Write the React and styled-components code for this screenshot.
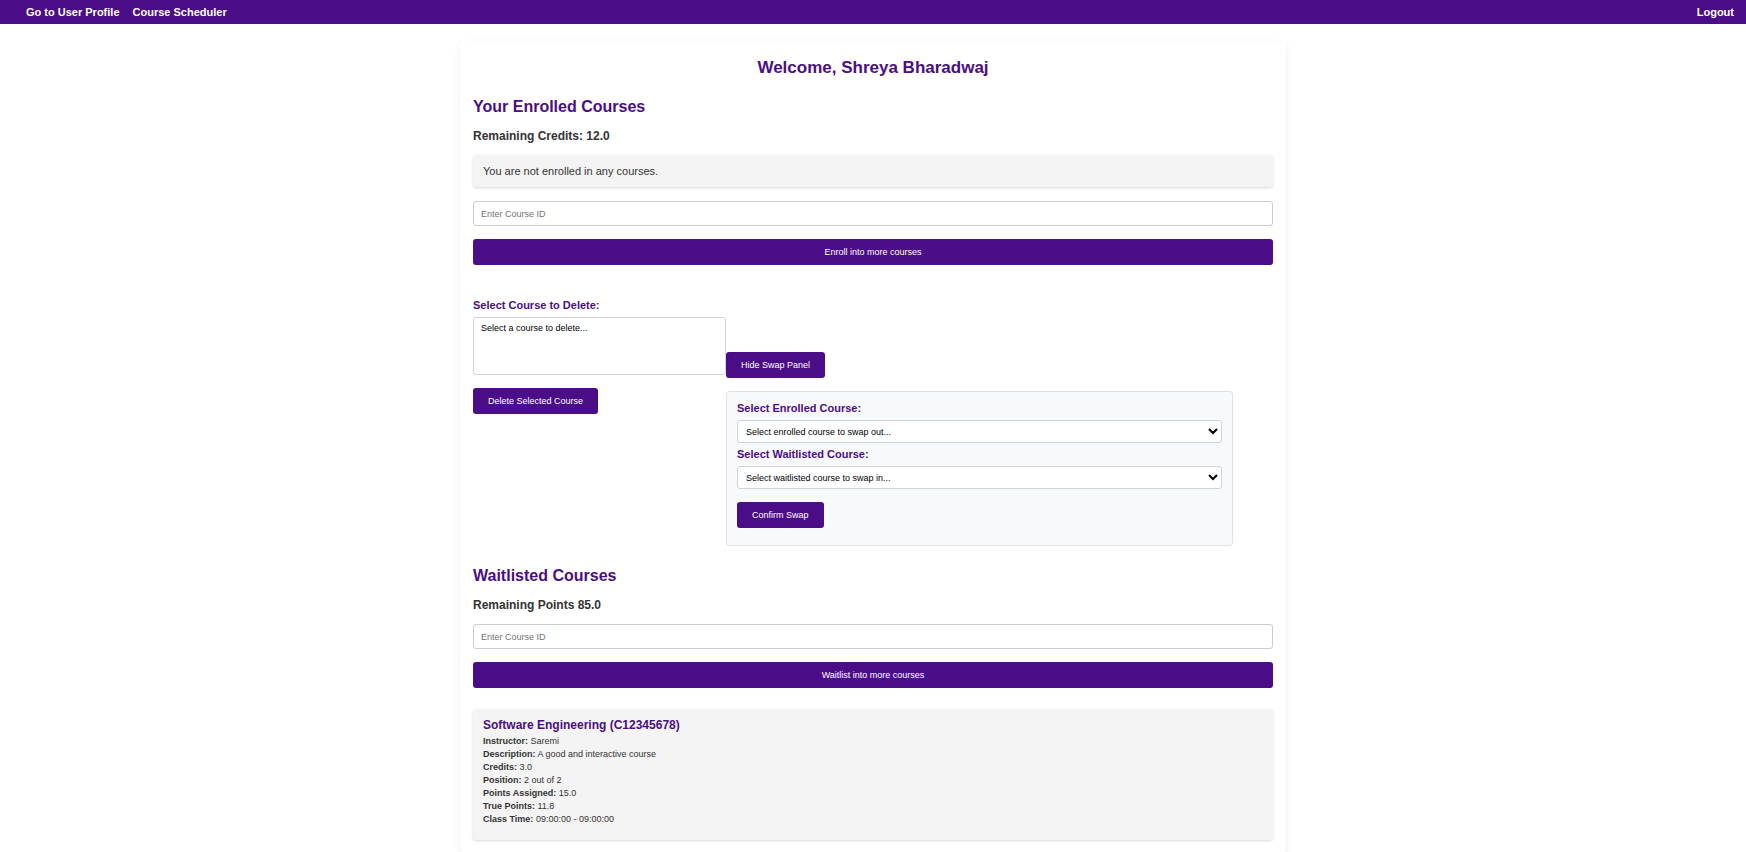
import React from "react";
import styled, { createGlobalStyle } from "styled-components";

const purple = "#4b0d87";

const GlobalStyle = createGlobalStyle`
  *, *::before, *::after { box-sizing: border-box; }
  body {
    margin: 0;
    background: #fff;
    color: #333;
    font-family: "Liberation Sans", Arial, sans-serif;
    font-size: 11px;
    line-height: 16px;
  }
`;

const NavBar = styled.nav`
  display: flex;
  align-items: center;
  justify-content: space-between;
  height: 24px;
  padding: 0 12px 0 26px;
  background: ${purple};
`;

const NavGroup = styled.div`
  display: flex;
  gap: 13px;
`;

const NavLink = styled.a`
  color: #fff;
  font-weight: bold;
  text-decoration: none;
`;

const Page = styled.main`
  max-width: 826px;
  margin: 17px auto 0;
  padding: 13px;
  border-radius: 5px;
  background: #fff;
  box-shadow: 0 3px 7px rgba(0, 0, 0, 0.08);
`;

const Title = styled.h1`
  margin: 0 0 15px;
  color: ${purple};
  font-size: 17px;
  line-height: 28px;
  text-align: center;
`;

const SectionTitle = styled.h2`
  margin: 0 0 11px;
  color: ${purple};
  font-size: 16px;
  line-height: 20px;
`;

const Balance = styled.h3`
  margin: 0 0 11px;
  font-size: 12px;
  line-height: 16px;
`;

const Notice = styled.p`
  margin: 0 0 14px;
  padding: 8px 10px;
  border-radius: 4px;
  background: #f4f4f4;
  box-shadow: 0 1px 3px rgba(0, 0, 0, 0.16);
`;

const CourseForm = styled.form`
  display: flex;
  flex-direction: column;
  gap: 13px;
`;

const TextInput = styled.input`
  width: 100%;
  height: 25px;
  padding: 0 7px;
  border: 1px solid #ccc;
  border-radius: 3px;
  background: #fff;
  font-family: inherit;
  font-size: 9px;

  &::placeholder { color: #757575; }
`;

const Button = styled.button`
  height: 26px;
  padding: 0 15px;
  border: 0;
  border-radius: 3px;
  background: ${purple};
  color: #fff;
  font-family: inherit;
  font-size: 9px;
  cursor: pointer;
`;

const ManageRow = styled.div`
  display: flex;
  align-items: flex-start;
  margin: 32px 0 20px;
`;

const DeleteColumn = styled.section`
  flex: 0 0 253px;
`;

const SwapColumn = styled.section`
  flex: 1;
  margin: 55px 40px 0 0;
`;

const SwapPanel = styled.div`
  margin-top: 13px;
  padding: 8px 10px 17px;
  border: 1px solid #dee2e6;
  border-radius: 3px;
  background: #f8f9fa;
`;

const FieldLabel = styled.label`
  display: block;
  margin-bottom: 4px;
  color: ${purple};
  font-weight: bold;
`;

const ListBox = styled.select`
  display: block;
  width: 100%;
  height: 58px;
  margin-bottom: 13px;
  padding: 5px;
  border: 1px solid #ced4da;
  border-radius: 3px;
  background: #fff;
  color: #000;
  font-family: inherit;
  font-size: 9px;
  overflow: hidden;
`;

const DropDown = styled.select`
  display: block;
  width: 100%;
  height: 23px;
  margin-bottom: ${(p) => (p.$last ? "13px" : "3px")};
  padding: 0 4px;
  border: 1px solid #ced4da;
  border-radius: 3px;
  background: #fff;
  color: #000;
  font-family: inherit;
  font-size: 9px;
`;

const CourseCard = styled.article`
  margin-top: 21px;
  padding: 8px 10px 14px;
  border-radius: 4px;
  background: #f4f4f4;
  box-shadow: 0 1px 3px rgba(0, 0, 0, 0.16);
`;

const CourseName = styled.h4`
  margin: 0 0 1px;
  color: ${purple};
  font-size: 12px;
  line-height: 17px;
`;

const CourseDetail = styled.p`
  margin: 0;
  font-size: 9px;
  line-height: 13px;
`;

const details = [
  ["Instructor:", "Saremi"],
  ["Description:", "A good and interactive course"],
  ["Credits:", "3.0"],
  ["Position:", "2 out of 2"],
  ["Points Assigned:", "15.0"],
  ["True Points:", "11.8"],
  ["Class Time:", "09:00:00 - 09:00:00"],
];

export default function App() {
  return (
    <>
      <GlobalStyle />
      <NavBar>
        <NavGroup>
          <NavLink href="#profile">Go to User Profile</NavLink>
          <NavLink href="#scheduler">Course Scheduler</NavLink>
        </NavGroup>
        <NavLink href="#logout">Logout</NavLink>
      </NavBar>
      <Page>
        <Title>Welcome, Shreya Bharadwaj</Title>

        <SectionTitle>Your Enrolled Courses</SectionTitle>
        <Balance>Remaining Credits: 12.0</Balance>
        <Notice>You are not enrolled in any courses.</Notice>
        <CourseForm onSubmit={(e) => e.preventDefault()}>
          <TextInput aria-label="Course ID to enroll" placeholder="Enter Course ID" />
          <Button type="submit">Enroll into more courses</Button>
        </CourseForm>

        <ManageRow>
          <DeleteColumn>
            <FieldLabel htmlFor="delete-course">Select Course to Delete:</FieldLabel>
            <ListBox id="delete-course" size={4}>
              <option value="">Select a course to delete...</option>
            </ListBox>
            <Button type="button">Delete Selected Course</Button>
          </DeleteColumn>
          <SwapColumn>
            <Button type="button">Hide Swap Panel</Button>
            <SwapPanel>
              <FieldLabel htmlFor="swap-out">Select Enrolled Course:</FieldLabel>
              <DropDown id="swap-out">
                <option>Select enrolled course to swap out...</option>
              </DropDown>
              <FieldLabel htmlFor="swap-in">Select Waitlisted Course:</FieldLabel>
              <DropDown id="swap-in" $last>
                <option>Select waitlisted course to swap in...</option>
              </DropDown>
              <Button type="button">Confirm Swap</Button>
            </SwapPanel>
          </SwapColumn>
        </ManageRow>

        <SectionTitle>Waitlisted Courses</SectionTitle>
        <Balance>Remaining Points 85.0</Balance>
        <CourseForm onSubmit={(e) => e.preventDefault()}>
          <TextInput aria-label="Course ID to waitlist" placeholder="Enter Course ID" />
          <Button type="submit">Waitlist into more courses</Button>
        </CourseForm>

        <CourseCard>
          <CourseName>Software Engineering (C12345678)</CourseName>
          {details.map(([label, value]) => (
            <CourseDetail key={label}>
              <strong>{label}</strong> {value}
            </CourseDetail>
          ))}
        </CourseCard>
      </Page>
    </>
  );
}
